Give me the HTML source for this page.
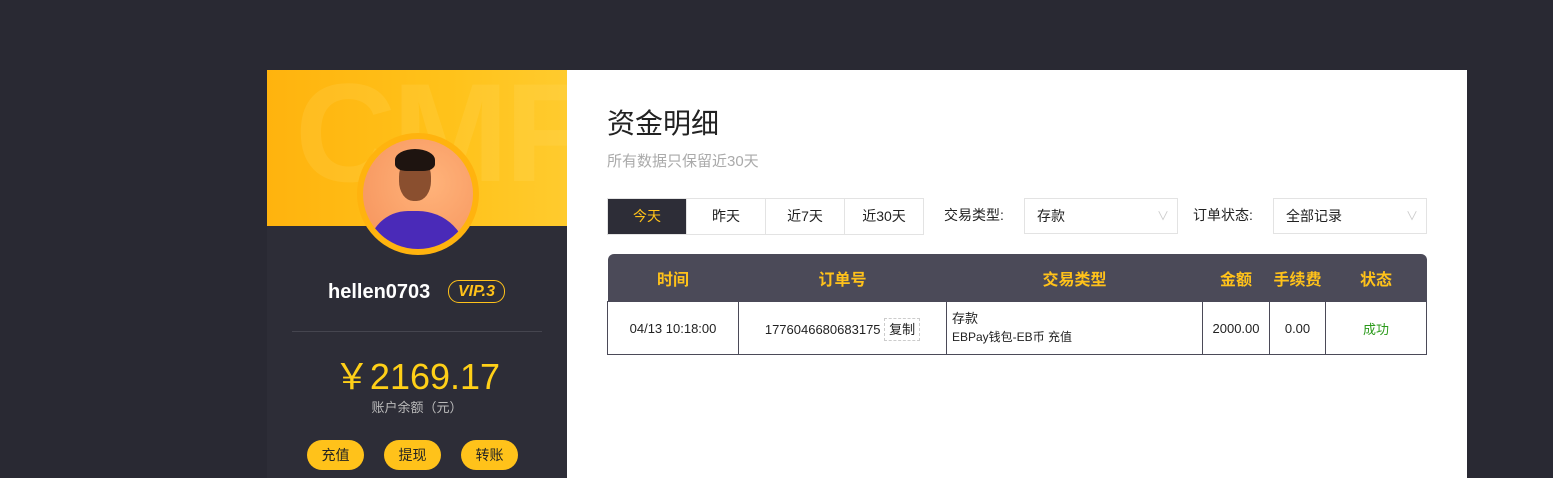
<!DOCTYPE html>
<html><head><meta charset="utf-8"><style>
body{margin:0;width:1553px;height:478px;background:#292933;font-family:"Liberation Sans","Noto Sans CJK SC",sans-serif;overflow:hidden;position:relative}
.side{position:absolute;left:267px;top:70px;width:300px;height:408px;background:#2d2d37;overflow:hidden}
.banner{position:absolute;left:0;top:0;width:300px;height:156px;background:linear-gradient(90deg,#ffb30e,#ffc21a 60%,#ffcb2e);overflow:hidden}
.cmf{position:absolute;left:28px;top:-18px;font-size:140px;font-weight:bold;color:rgba(255,220,110,.18);letter-spacing:-4px}
.av{position:absolute;left:90px;top:63px;width:122px;height:122px;border-radius:50%;background:#ffb30e}
.av .in{position:absolute;left:6px;top:6px;width:110px;height:110px;border-radius:50%;background:radial-gradient(circle at 60% 40%,#ffb37a,#f5915a);overflow:hidden}
.shirt{position:absolute;left:5px;top:72px;width:100px;height:60px;background:#4a2ab8;border-radius:40px 50px 0 0}
.head{position:absolute;left:36px;top:18px;width:32px;height:44px;background:#8a4f2f;border-radius:45%}
.hair{position:absolute;left:32px;top:10px;width:40px;height:22px;background:#1e1410;border-radius:50% 50% 30% 30%}
.name{position:absolute;top:211px;left:61px;color:#fff;font-weight:bold;font-size:20px}
.vip{position:absolute;left:181px;top:210px;width:55px;height:21px;border:1px solid #ffc21a;border-radius:11px;color:#ffc21a;font-style:italic;font-weight:bold;font-size:16px;text-align:center;line-height:21px}
.hr{position:absolute;left:25px;top:261px;width:250px;height:1px;background:#45454f}
.amt{position:absolute;left:0;width:300px;top:278px;text-align:center;color:#ffd018;font-size:36px}
.lbl{position:absolute;left:0;width:300px;top:327px;text-align:center;color:#bbb;font-size:13px}
.btn{position:absolute;top:370px;width:57px;height:30px;border-radius:15px;background:#ffc21a;color:#222;font-size:14px;text-align:center;line-height:30px}
.main{position:absolute;left:567px;top:70px;width:900px;height:408px;background:#fff}
h1{position:absolute;left:40px;top:32px;margin:0;font-size:28px;font-weight:normal;color:#222}
.sub{position:absolute;left:40px;top:80px;color:#aaa;font-size:15px}
.tabs{position:absolute;left:40px;top:128px;height:35px;display:flex;border:1px solid #e3e3e3}
.tabs div{width:78px;text-align:center;line-height:35px;font-size:14px;color:#222;border-left:1px solid #e3e3e3}
.tabs div:first-child{border:0;background:#2d2d37;color:#ffc21a}
.fl{position:absolute;top:128px;font-size:14px;color:#222;line-height:35px}
.sel{position:absolute;top:128px;height:36px;border:1px solid #e3e3e3;font-size:14px;line-height:34px;padding-left:12px;box-sizing:border-box;color:#222}
.sel:after{content:"∨";position:absolute;right:8px;color:#ccc;font-size:12px}
table{position:absolute;left:40px;top:184px;width:820px;border-collapse:collapse;font-size:13px;color:#222;table-layout:fixed}
th{background:#4b4a58;color:#ffc21a;height:47px;font-size:16px;padding:0}
td{border:1px solid #4b4a58;height:52px;text-align:center;padding:0}
</style></head><body>
<div class="side">
<div class="banner"><div class="cmf">CMF</div></div>
<div class="av"><div class="in"><div class="shirt"></div><div class="head"></div><div class="hair"></div></div></div>
<div class="name">hellen0703</div><div class="vip">VIP.3</div>
<div class="hr"></div>
<div class="amt">￥2169.17</div>
<div class="lbl">账户余额（元）</div>
<div class="btn" style="left:40px">充值</div><div class="btn" style="left:117px">提现</div><div class="btn" style="left:194px">转账</div>
</div>
<div class="main">
<h1>资金明细</h1><div class="sub">所有数据只保留近30天</div>
<div class="tabs"><div>今天</div><div>昨天</div><div>近7天</div><div>近30天</div></div>
<div class="fl" style="left:377px">交易类型:</div>
<div class="sel" style="left:457px;width:154px">存款</div>
<div class="fl" style="left:626px">订单状态:</div>
<div class="sel" style="left:706px;width:154px">全部记录</div>
<table><colgroup><col style="width:131px"><col style="width:208px"><col style="width:256px"><col style="width:67px"><col style="width:56px"><col></colgroup>
<tr><th style="border-radius:6px 0 0 0">时间</th><th>订单号</th><th>交易类型</th><th>金额</th><th>手续费</th><th style="border-radius:0 6px 0 0">状态</th></tr>
<tr><td>04/13 10:18:00</td><td>1776046680683175 <span style="border:1px dashed #ccc;padding:3px 4px">复制</span></td><td style="text-align:left;padding-left:5px;line-height:18px">存款<br><span style="font-size:12px">EBPay钱包-EB币 充值</span></td><td>2000.00</td><td>0.00</td><td style="color:#2a9a1a">成功</td></tr></table>
</div>
</body></html>
